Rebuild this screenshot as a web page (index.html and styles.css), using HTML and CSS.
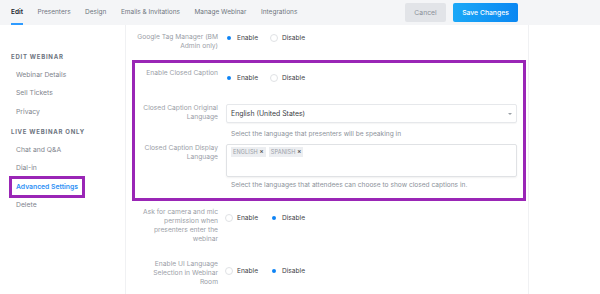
FILE: index.html
```html
<!DOCTYPE html>
<html>
<head>
<meta charset="utf-8">
<link rel="stylesheet" href="styles.css">
</head>
<body>
<header class="topbar">
  <nav class="tabs">
    <a class="tab active">Edit</a>
    <a class="tab">Presenters</a>
    <a class="tab">Design</a>
    <a class="tab">Emails &amp; Invitations</a>
    <a class="tab">Manage Webinar</a>
    <a class="tab">Integrations</a>
  </nav>
  <div class="actions">
    <button class="btn cancel">Cancel</button>
    <button class="btn save">Save Changes</button>
  </div>
</header>
<div class="layout">
  <aside class="sidebar">
    <div class="sec-title">EDIT WEBINAR</div>
    <a class="item">Webinar Details</a>
    <a class="item">Sell Tickets</a>
    <a class="item">Privacy</a>
    <div class="sec-title sec2">LIVE WEBINAR ONLY</div>
    <a class="item">Chat and Q&amp;A</a>
    <a class="item">Dial-in</a>
    <a class="item current">Advanced Settings</a>
    <a class="item">Delete</a>
  </aside>
  <main class="main">
    <div class="group g-top">
      <div class="row r-gtm">
        <div class="label">Google Tag Manager (BM<br>Admin only)</div>
        <div class="radios c-gtm">
          <span class="radio on"></span><span class="rtext">Enable</span>
          <span class="radio"></span><span class="rtext">Disable</span>
        </div>
      </div>
    </div>
    <div class="group hl">
      <div class="row r-cc">
        <div class="label">Enable Closed Caption</div>
        <div class="radios c-cc">
          <span class="radio on"></span><span class="rtext">Enable</span>
          <span class="radio"></span><span class="rtext">Disable</span>
        </div>
      </div>
      <div class="row r-orig">
        <div class="label">Closed Caption Original<br>Language</div>
        <div class="field">
          <div class="select">English (United States)<span class="caret"></span></div>
          <div class="help h1">Select the language that presenters will be speaking in</div>
        </div>
      </div>
      <div class="row r-disp">
        <div class="label">Closed Caption Display<br>Language</div>
        <div class="field">
          <div class="multi">
            <span class="tag">ENGLISH <b>×</b></span>
            <span class="tag">SPANISH <b>×</b></span>
          </div>
          <div class="help h2">Select the languages that attendees can choose to show closed captions in.</div>
        </div>
      </div>
    </div>
    <div class="group">
      <div class="row r-cam">
        <div class="label">Ask for camera and mic<br>permission when<br>presenters enter the<br>webinar</div>
        <div class="radios c-cam">
          <span class="radio"></span><span class="rtext">Enable</span>
          <span class="radio on"></span><span class="rtext">Disable</span>
        </div>
      </div>
      <div class="row r-ui">
        <div class="label">Enable UI Language<br>Selection in Webinar<br>Room</div>
        <div class="radios c-ui">
          <span class="radio"></span><span class="rtext">Enable</span>
          <span class="radio on"></span><span class="rtext">Disable</span>
        </div>
      </div>
    </div>
  </main>
  <div class="rest"></div>
</div>
</body>
</html>
```
FILE: styles.css
```css
* { box-sizing: border-box; }
html, body { margin: 0; padding: 0; }
body {
  width: 600px;
  height: 294px;
  overflow: hidden;
  background: #ffffff;
  font-family: Inter, "Liberation Sans", sans-serif;
  color: #444;
}
.topbar {
  height: 25px;
  background: #f4f5f7;
  display: flex;
  align-items: flex-start;
  justify-content: space-between;
  padding: 0 82px 0 11px;
}
.tabs {
  display: flex;
  gap: 14.5px;
  height: 25px;
}
.tab {
  font-size: 6.5px;
  color: #6f7680;
  line-height: 24px;
  height: 25px;
  border-bottom: 2px solid transparent;
}
.tab.active {
  color: #23272e;
  font-weight: 600;
  border-bottom-color: #2e9bff;
}
.actions {
  display: flex;
  gap: 7px;
  padding-top: 3px;
}
.btn {
  border: 0;
  border-radius: 2px;
  height: 19px;
  font-family: inherit;
  font-size: 6.8px;
  padding: 0;
}
.cancel { width: 41px; background: #e2e4e8; color: #8a9099; }
.save {
  width: 65px;
  color: #fff;
  font-weight: 500;
  background: linear-gradient(90deg, #1ba8f7, #0a87f2);
}
.layout {
  display: flex;
  height: 269px;
}
.sidebar {
  width: 126px;
  border-right: 1px solid #f0f1f3;
  padding: 27px 0 0 9px;
  display: flex;
  flex-direction: column;
  align-items: flex-start;
}
.sec-title {
  font-size: 6px;
  font-weight: 700;
  letter-spacing: 0.75px;
  color: #6d7480;
  padding-left: 2px;
  height: 10px;
  line-height: 10px;
  margin-bottom: 3.75px;
}
.sec2 { margin-top: 5.75px; }
.item {
  display: block;
  font-size: 6.8px;
  color: #7f858e;
  line-height: 12.5px;
  border: 3px solid transparent;
  padding: 0 4px;
}
.item.current {
  color: #2d8ff5;
  font-weight: 600;
  border-color: #9a26b6;
  padding: 2px 4px;
  margin: -2px 0;
}
.main {
  width: 403px;
  border-right: 1px solid #f0f1f3;
  padding: 4.5px 2px 0 6px;
}
.rest { flex: 1; }
.group {
  border: 3px solid transparent;
  padding: 0 6px 0 0;
}
.group.hl {
  border-color: #9a26b6;
  margin-top: 6.5px;
  padding-bottom: 7.5px;
}
.row {
  display: flex;
  gap: 8px;
  align-items: flex-start;
}
.label {
  width: 83px;
  flex: none;
  text-align: right;
  font-size: 6.7px;
  line-height: 9px;
  color: #9ba0a7;
}
.radios {
  display: flex;
  align-items: center;
  height: 10px;
}
.radio {
  width: 8px;
  height: 8px;
  border-radius: 50%;
  border: 1px solid #e0e2e5;
  margin-left: -1px;
  margin-right: 4px;
  background: #fff;
  flex: none;
}
.radio.on {
  border: 2px solid #fff;
  background: #0d83f5;
}
.rtext {
  font-size: 6.6px;
  color: #3c4047;
  width: 34px;
}
.c-gtm { margin-top: 0.5px; }
.r-cc { padding-top: 5.5px; }
.c-cc { margin-top: 4.5px; }
.r-orig { margin-top: 21px; }
.r-disp { margin-top: 4.5px; }
.field { flex: 1; }
.select {
  height: 19px;
  border: 1px solid #e6e8eb;
  border-radius: 2px;
  box-shadow: 0 1px 1px rgba(0,0,0,0.04);
  font-size: 6.9px;
  color: #3a3e45;
  line-height: 17px;
  padding-left: 4px;
  position: relative;
  margin-top: -0.5px;
}
.caret {
  position: absolute;
  right: 4px;
  top: 8px;
  border-left: 2px solid transparent;
  border-right: 2px solid transparent;
  border-top: 2px solid #9aa0a6;
}
.help {
  font-size: 6.6px;
  color: #8c929a;
  padding-left: 5px;
  line-height: 9px;
}
.h1 { margin-top: 7.5px; }
.h2 { margin-top: 4.5px; }
.multi {
  height: 33px;
  border: 1px solid #e0e2e5;
  border-radius: 2px;
  box-shadow: 0 1px 2px rgba(0,0,0,0.06);
  padding: 2px 4px;
  display: flex;
  align-items: flex-start;
  gap: 3px;
}
.tag {
  background: #eceef1;
  font-size: 5.6px;
  color: #9aa0a7;
  padding: 0 2px;
  height: 10px;
  line-height: 10px;
  letter-spacing: 0.1px;
}
.tag b { color: #555; font-size: 6px; }
.r-cam { margin-top: 4.5px; }
.c-cam { margin-top: 4.5px; }
.r-ui { margin-top: 16px; }
.c-ui { margin-top: 5.5px; }
```
